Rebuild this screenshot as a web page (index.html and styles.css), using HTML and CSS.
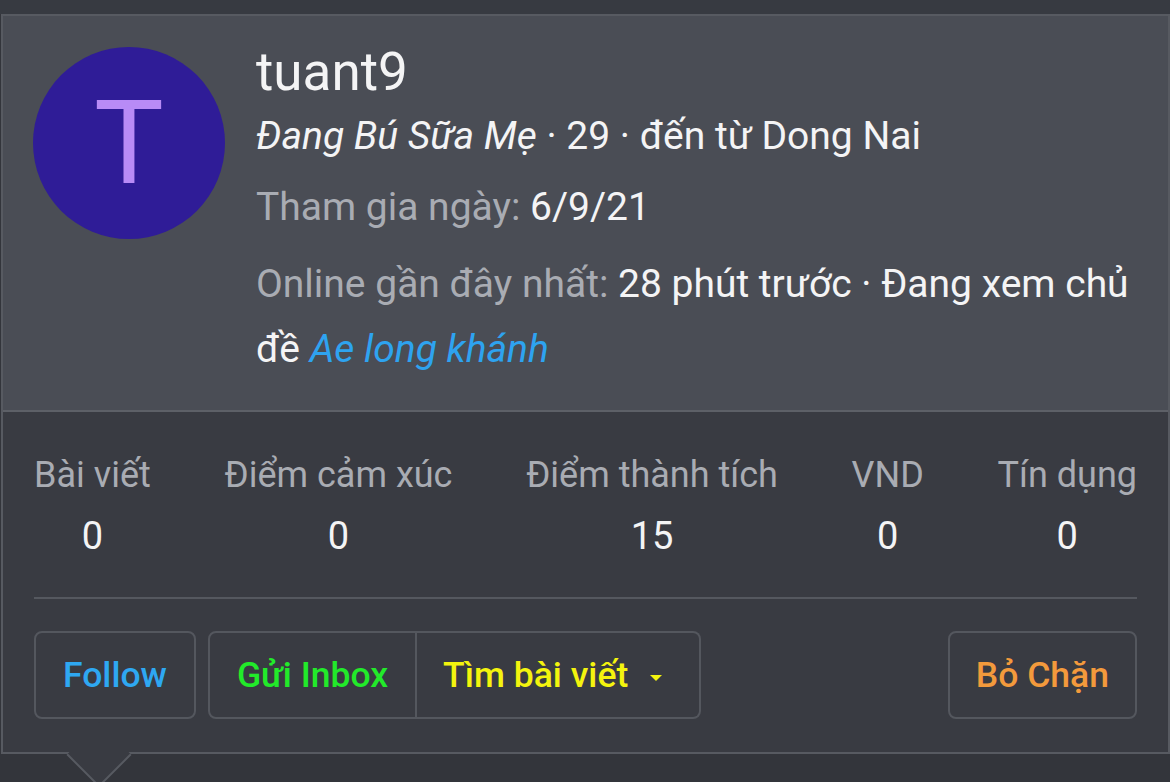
FILE: index.html
```html
<!DOCTYPE html>
<html lang="vi">
<head>
    <meta charset="UTF-8">
    <meta name="viewport" content="width=device-width, initial-scale=1.0">
    <title>tuant9</title>
    <link rel="stylesheet" href="styles.css">
</head>
<body>
    <div class="tooltip">
        <div class="profile">
            <div class="avatar">T</div>
            <div class="info">
                <h2 class="username">tuant9</h2>
                <p class="blurb"><em>Đang Bú Sữa Mẹ</em> · 29 · đến từ Dong Nai</p>
                <p class="meta"><span class="muted">Tham gia ngày:</span> 6/9/21</p>
                <p class="meta meta-online"><span class="muted">Online gần đây nhất:</span> 28 phút trước · Đang xem chủ đề <a href="#" class="thread">Ae long khánh</a></p>
            </div>
        </div>

        <div class="details">
            <div class="stats">
                <div class="stat">
                    <div class="stat-label">Bài viết</div>
                    <div class="stat-value">0</div>
                </div>
                <div class="stat">
                    <div class="stat-label">Điểm cảm xúc</div>
                    <div class="stat-value">0</div>
                </div>
                <div class="stat">
                    <div class="stat-label">Điểm thành tích</div>
                    <div class="stat-value">15</div>
                </div>
                <div class="stat">
                    <div class="stat-label">VND</div>
                    <div class="stat-value">0</div>
                </div>
                <div class="stat">
                    <div class="stat-label">Tín dụng</div>
                    <div class="stat-value">0</div>
                </div>
            </div>

            <div class="actions">
                <button class="btn btn-follow">Follow</button>
                <div class="btn-group">
                    <button class="btn btn-inbox">Gửi Inbox</button>
                    <button class="btn btn-search">Tìm bài viết<span class="caret"></span></button>
                </div>
                <button class="btn btn-unblock">Bỏ Chặn</button>
            </div>
        </div>

        <span class="arrow"></span>
    </div>
</body>
</html>
```

FILE: styles.css
```css
/* dark member tooltip */
body {
    margin: 0;
    padding: 0;
    background-color: #33353b;
    font-family: Roboto, "Noto Sans", sans-serif;
    color: #f4f4f5;
    height: 782px;
    overflow: hidden;
}
body::before {
    content: "";
    display: block;
    height: 14px;
    background: #373a41;
}
.tooltip {
    position: relative;
    margin: 0 0 0 1px;
    border: 2px solid #575a61;
    background: #393b42;
}
.profile {
    display: flex;
    gap: 31px;
    padding: 24px 30px 28px 30px;
    background: #4a4d55;
    border-bottom: 2px solid #5d6067;
}
.avatar {
    flex: 0 0 192px;
    width: 192px;
    height: 192px;
    margin-top: 7px;
    border-radius: 50%;
    background: #2f1c97;
    color: #b88bf6;
    font-size: 117px;
    line-height: 192px;
    text-align: center;
}
.info {
    flex: 1;
}
.username {
    margin: 0;
    font-size: 53px;
    font-weight: 400;
    line-height: 64px;
}
.blurb, .meta {
    margin: 0;
    font-size: 39px;
    line-height: 65px;
}
.meta {
    margin-top: 6px;
}
.meta-online {
    margin-top: 12px;
}
.muted {
    color: #a9acb3;
}
.thread {
    color: #2ea3f0;
    font-style: italic;
    text-decoration: none;
}
.details {
    padding: 39px 31px 33px 31px;
}
.stats {
    display: flex;
    justify-content: space-between;
    padding-bottom: 36px;
    border-bottom: 2px solid #55585f;
}
.stat {
    text-align: center;
}
.stat-label {
    color: #a9acb3;
    font-size: 36px;
    line-height: 48px;
}
.stat-value {
    margin-top: 12px;
    font-size: 38px;
    line-height: 50px;
}
.actions {
    display: flex;
    align-items: center;
    gap: 12px;
    margin-top: 32px;
}
.btn {
    height: 88px;
    padding: 0 26px;
    border: 2px solid #54575e;
    border-radius: 8px;
    background: #393b42;
    font-family: Roboto, "Noto Sans", sans-serif;
    font-size: 35.5px;
    font-weight: 500;
    cursor: pointer;
}
.btn-group {
    display: flex;
}
.btn-group .btn:first-child {
    border-radius: 8px 0 0 8px;
}
.btn-group .btn:last-child {
    border-left: none;
    border-radius: 0 8px 8px 0;
    padding-right: 37px;
}
.btn-follow {
    padding: 0 27px;
    color: #2ea8f2;
}
.btn-inbox {
    padding: 0 27px;
    color: #22ea2a;
}
.btn-search {
    color: #f4f40e;
}
.btn-unblock {
    margin-left: auto;
    color: #f39a3c;
}
.caret {
    display: inline-block;
    margin-left: 22px;
    vertical-align: middle;
    border-left: 6px solid transparent;
    border-right: 6px solid transparent;
    border-top: 6px solid #f4f40e;
}
.arrow {
    position: absolute;
    left: 73px;
    bottom: -26px;
    width: 44px;
    height: 44px;
    background: #393b42;
    border-right: 2px solid #575a61;
    border-bottom: 2px solid #575a61;
    transform: rotate(45deg);
}
```
